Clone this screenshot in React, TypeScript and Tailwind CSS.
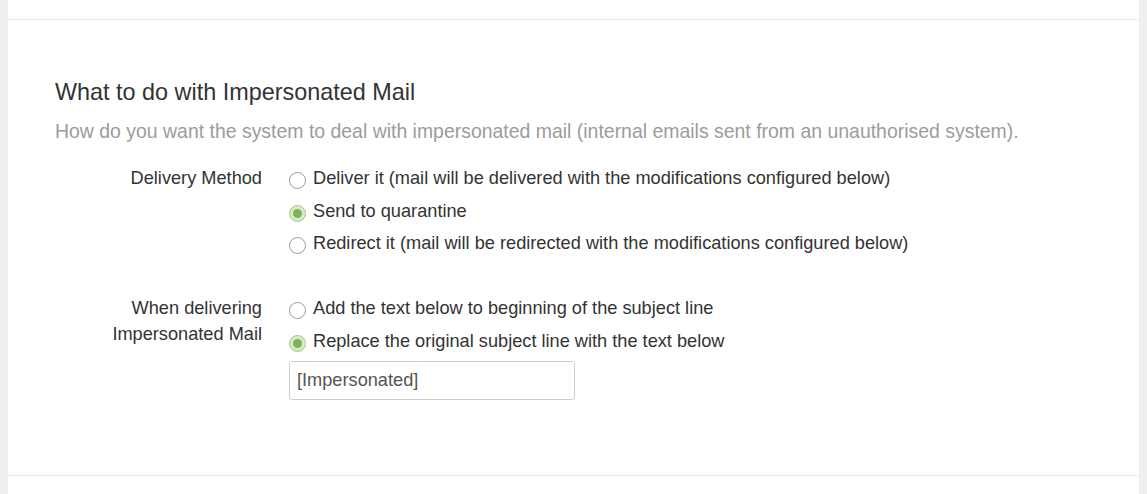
function Radio({ checked }: { checked?: boolean }) {
  if (checked) {
    return (
      <span className="mt-[7px] flex h-[17px] w-[17px] shrink-0 items-center justify-center rounded-full border-[1.5px] border-[#a3c78a] bg-[#d9eacb]">
        <span className="h-[9px] w-[9px] rounded-full bg-[#80b25c]" />
      </span>
    );
  }
  return <span className="mt-[7px] h-[17px] w-[17px] shrink-0 rounded-full border-[1.5px] border-[#999] bg-white" />;
}

function Option({ label, checked }: { label: string; checked?: boolean }) {
  return (
    <label className="flex h-[26px] items-start gap-[7px] leading-[26px]">
      <Radio checked={checked} />
      <span>{label}</span>
    </label>
  );
}

export default function App() {
  return (
    <div className="flex h-[494px] w-[1147px] bg-[#efefef] px-[8px] font-['Liberation_Sans',Arial,sans-serif] text-[#333]">
      <div className="flex flex-1 flex-col bg-white">
        <div className="h-[20px] border-b border-[#e8e8e8]" />
        <div className="flex-1 px-[47px] pt-[58px]">
          <h2 className="text-[23.4px] leading-[28px] text-[#333]">What to do with Impersonated Mail</h2>
          <p className="mt-[12px] text-[19.45px] leading-[26px] text-[#9c9c9c]">
            How do you want the system to deal with impersonated mail (internal emails sent from an unauthorised system).
          </p>

          <div className="mt-[21px] grid grid-cols-[207px_1fr] gap-x-[27px] text-[18.2px]">
            <div className="text-right leading-[26px]">Delivery Method</div>
            <div className="flex flex-col gap-[6.5px]">
              <Option label="Deliver it (mail will be delivered with the modifications configured below)" />
              <Option label="Send to quarantine" checked />
              <Option label="Redirect it (mail will be redirected with the modifications configured below)" />
            </div>

            <div className="mt-[39px] text-right leading-[26px]">
              When delivering
              <br />
              Impersonated Mail
            </div>
            <div className="mt-[39px] flex flex-col gap-[7px]">
              <Option label="Add the text below to beginning of the subject line" />
              <Option label="Replace the original subject line with the text below" checked />
              <input
                defaultValue="[Impersonated]"
                className="h-[39px] w-[286px] rounded-[3px] border border-[#cfcfcf] px-[7px] text-[18.2px] text-[#555] outline-none"
              />
            </div>
          </div>
        </div>
        <div className="h-[19px] border-t border-[#e8e8e8]" />
      </div>
    </div>
  );
}
